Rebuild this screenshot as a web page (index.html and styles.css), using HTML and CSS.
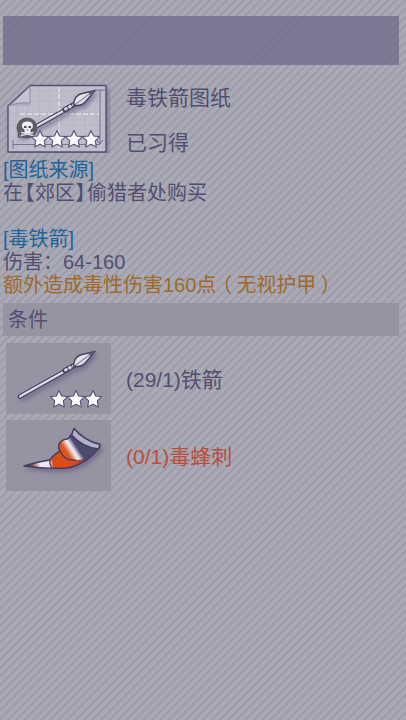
FILE: index.html
```html
<!DOCTYPE html>
<html lang="zh-CN">
<head>
<meta charset="utf-8">
<meta name="viewport" content="width=device-width, initial-scale=1">
<title>毒铁箭图纸</title>
<link rel="stylesheet" href="styles.css">
</head>
<body>
<svg class="defs" width="0" height="0" aria-hidden="true">
  <defs>
    <filter id="shade" x="-20%" y="-20%" width="150%" height="160%">
      <feDropShadow dx="2" dy="3" stdDeviation="2" flood-color="#615a80" flood-opacity=".65"/>
    </filter>
    <linearGradient id="metal" x1="0" y1="0" x2="1" y2="1">
      <stop offset="0" stop-color="#f4f3fa"/>
      <stop offset="1" stop-color="#c9c6d8"/>
    </linearGradient>
    <linearGradient id="sting" gradientUnits="userSpaceOnUse" x1="18" y1="46" x2="90" y2="34">
      <stop offset="0" stop-color="#39304f"/>
      <stop offset=".12" stop-color="#a0504c"/>
      <stop offset=".22" stop-color="#eee7ed"/>
      <stop offset=".35" stop-color="#eee7ed"/>
      <stop offset=".4" stop-color="#dd4c19"/>
      <stop offset=".7" stop-color="#dd4c19"/>
      <stop offset=".88" stop-color="#4e4b70"/>
    </linearGradient>
    <linearGradient id="band" gradientUnits="userSpaceOnUse" x1="56" y1="33" x2="76" y2="20">
      <stop offset="0" stop-color="#dd4c19"/>
      <stop offset=".2" stop-color="#dd5a2a"/>
      <stop offset=".42" stop-color="#f1e9ec"/>
      <stop offset=".5" stop-color="#dcd6e2"/>
      <stop offset=".66" stop-color="#4e4b70"/>
    </linearGradient>
    <path id="star" d="M0-8.500 2.600-3 8.500-2.300 4.300 1.900 5.300 8 0 5.200-5.300 8-4.300 1.900-8.500-2.300-2.600-3Z" fill="#fbfafd" stroke="#5b5578" stroke-width="1.200" stroke-linejoin="round"/>
    <g id="spear" filter="url(#shade)" stroke="#48415f" stroke-linejoin="round" stroke-linecap="round">
      <path d="M14 53.500 62 26.500" stroke-width="4.600"/>
      <path d="M14 53.500 62 26.500" stroke="#cbc8da" stroke-width="2.200"/>
      <path d="M14 53 61 26.500" stroke="#efedf6" stroke-width="1"/>
      <path d="M59 27.500 68 22.500" stroke-width="5.400"/>
      <path d="M59.500 27 68 22.500" stroke="#d5d2e2" stroke-width="3" stroke-dasharray="1 3.500"/>
      <path d="M67.500 23C68 17 71 12.500 76 11.500L89 8.500 81 18C78 22 73 24.500 67.500 23Z" fill="url(#metal)" stroke-width="1.400"/>
      <path d="M69 22.500C74 19 79 15 87 9.500" fill="none" stroke-width=".8"/>
      <path d="M82 10.200 89 8.500 85 13.300Z" fill="#625b78" stroke="none"/>
    </g>
  </defs>
</svg>
<main class="screen">
  <div class="titlebar"></div>

  <header class="item">
    <svg class="item-art" viewBox="0 0 105 71" aria-hidden="true">
      <path d="M2 24 24 3.500H100V70H2Z" fill="#bfbdcb" stroke="#575074" stroke-width="1.400" stroke-linejoin="round" filter="url(#shade)"/>
      <path d="M11 24V69M22 24V69M33 5V69M44 5V69M68 5V69M79 5V69M90 5V69M3 31H99M3 43H99M24 19H99M24 9H99M3 55H99" stroke="#b2afc0" stroke-width=".6"/>
      <path d="M3 24 24 4.500V24Z" fill="#adabc0"/>
      <path d="M4 23.500 24 4.500V21Q12 20 4 23.500Z" fill="#c6c4d2" stroke="#7f7993" stroke-width=".7"/>
      <path d="M53 5V69M14 32H94" fill="none" stroke="#e5e3ec" stroke-width="1.300" stroke-dasharray="5 2"/>
      <path d="M7 58V67M7 62.500H94M89 8H99M94 8V62M91 58 94 62 97 58" fill="none" stroke="#77728d" stroke-width="1"/>
      <use href="#spear"/>
      <circle cx="21" cy="46" r="10.500" fill="#55545d" opacity=".9"/>
      <path d="M15.500 50.500 27 53.500M15.500 53.500 27 50.500" stroke="#d9d8e0" stroke-width="1.600" stroke-linecap="round"/>
      <path d="M16.500 46C14.500 41.500 17.500 39.500 21.500 39.500S28 42 26.500 46L24.500 47.500V51H18.500V47.500Z" fill="#eeedf3"/>
      <path d="M18 44H20.500V46H18ZM22.500 44H25V46H22.500ZM21 47.500H22V48.500H21Z" fill="#494756"/>
      <use href="#star" x="34" y="57"/><use href="#star" x="51" y="57"/><use href="#star" x="68" y="57"/><use href="#star" x="85" y="57"/>
    </svg>
    <div class="item-text">
      <h1 class="item-name">毒铁箭图纸</h1>
      <p class="item-state">已习得</p>
    </div>
  </header>

  <section class="details">
    <p class="link-title">[图纸来源]</p>
    <p>在<span class="bracket">【</span>郊区<span class="bracket">】</span>偷猎者处购买</p>
    <p class="link-title spaced">[毒铁箭]</p>
    <p>伤害：64-160</p>
    <p class="bonus">额外造成毒性伤害160点<span class="paren">（</span>无视护甲<span class="paren">）</span></p>
  </section>

  <section>
    <h2 class="section-title">条件</h2>
    <ul class="needs">
      <li class="need">
        <span class="slot">
          <svg viewBox="0 0 105 71" aria-hidden="true">
            <use href="#spear"/>
            <use href="#star" x="53" y="56"/><use href="#star" x="70" y="56"/><use href="#star" x="87" y="56"/>
          </svg>
        </span>
        <span class="need-name">(29/1)铁箭</span>
      </li>
      <li class="need missing">
        <span class="slot">
          <svg viewBox="0 0 105 71" aria-hidden="true">
            <g filter="url(#shade)" stroke="#403a60" stroke-width="1.400" stroke-linejoin="round">
              <path d="M18 46C28 43 37 41 44 40 47 35 51 33 54 31 51 26 53 20 62 19L66 14 94 26C88 36 76 45 61 48 46 49 32 48 18 46Z" fill="url(#sting)"/>
              <path d="M54 31C51 26 53 20 62 19L66 14 93 28C86 36 78 40 70 40 62 40 56 37 54 31Z" fill="url(#band)" stroke="none"/>
              <path d="M62 19C53 20 51 26 54 31 57 38 63 41 70 40M44 40Q43 44 46 48M62 19 66 14" fill="none" stroke-width="1.200"/>
              <path d="M68 8.500C75 17 84 22 94 24.500L92.500 29C81 28 72 22 65.500 15Z" fill="#afb2c9"/>
            </g>
          </svg>
        </span>
        <span class="need-name">(0/1)毒蜂刺</span>
      </li>
    </ul>
  </section>
</main>
</body>
</html>
```

FILE: styles.css
```css
* {
  box-sizing: border-box;
}

body {
  margin: 0;
  min-height: 100vh;
  color: #534e70;
  font: 20px/23px "Liberation Sans", "Noto Sans CJK SC", sans-serif;
  background: repeating-linear-gradient(135deg, #a9aab5 0 3px, #9d9da9 4px 5px, #a9aab5 6px);
}

h1,
h2,
p,
ul {
  margin: 0;
  padding: 0;
  font-size: inherit;
  font-weight: 400;
}

svg {
  display: block;
  width: 105px;
  height: 71px;
}

.defs {
  position: absolute;
  width: 0;
  height: 0;
}

.screen {
  padding: 16px 7px 16px 3px;
}

.titlebar {
  height: 49px;
  background: rgb(108 101 134 / 72%);
}

.item {
  display: flex;
  gap: 15px;
  padding: 17px 3px 5px;
}

.item-text {
  display: flex;
  flex-direction: column;
  gap: 22px;
  padding-top: 4px;
  font-size: 21px;
}

.link-title {
  color: #22639a;
}

.spaced {
  margin-top: 23px;
}

.bonus {
  color: #a0682b;
}

.bracket,
.paren {
  display: inline-block;
  font-feature-settings: "palt";
  text-align: center;
}

.bracket {
  width: 12px;
}

.paren {
  width: 20px;
}

.section-title {
  margin-top: 6px;
  padding: 6px 5px 4px;
  background: #9694a3;
}

.needs {
  display: grid;
  gap: 6px;
  padding: 7px 3px;
  list-style: none;
}

.need {
  display: flex;
  align-items: center;
  gap: 15px;
  font-size: 21px;
}

.need-name {
  padding-top: 2px;
}

.slot {
  background: #9694a3;
}

.missing {
  color: #b94e3d;
}
```
